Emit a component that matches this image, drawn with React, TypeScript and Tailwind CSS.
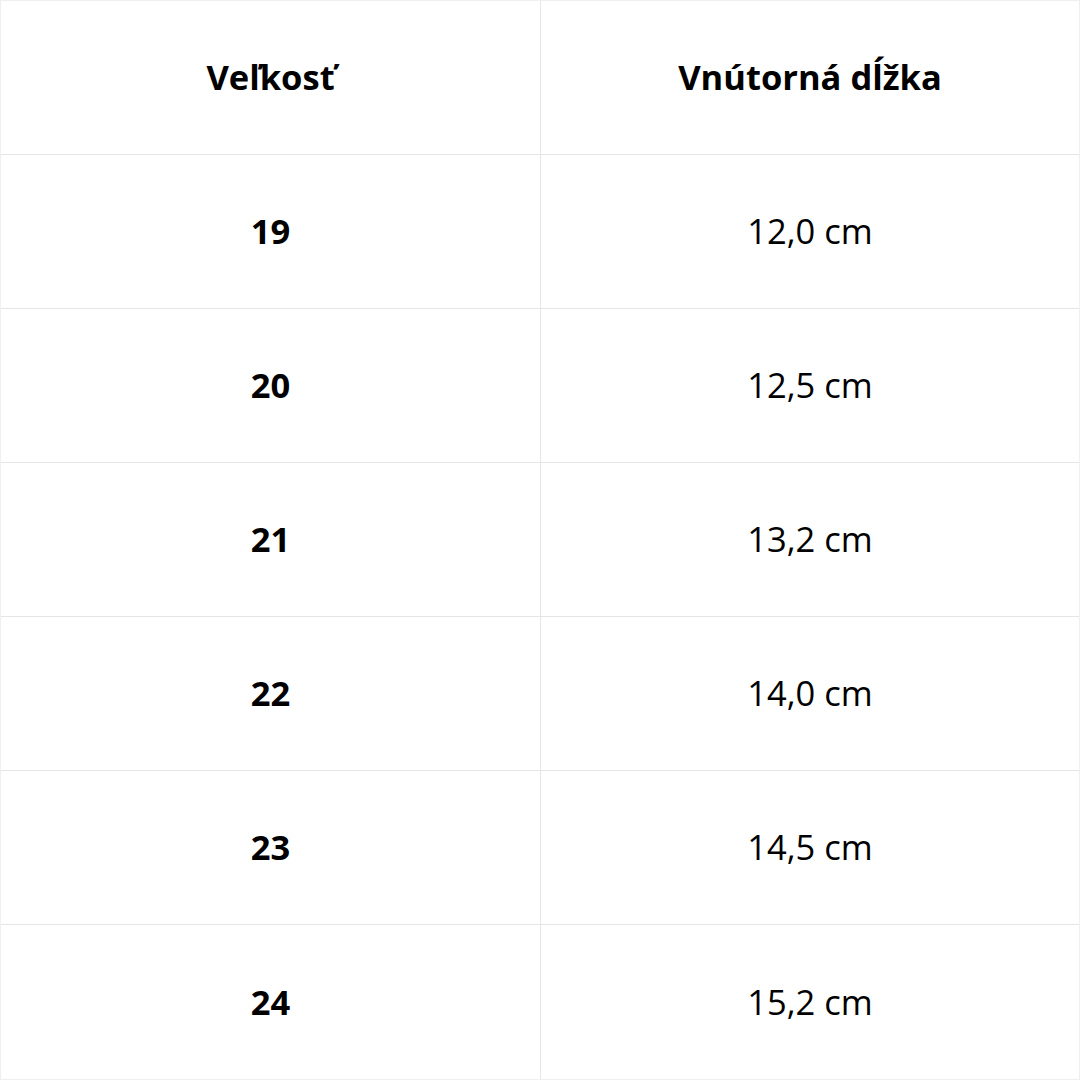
import React from "react";

const rows = [
  ["19", "12,0 cm"],
  ["20", "12,5 cm"],
  ["21", "13,2 cm"],
  ["22", "14,0 cm"],
  ["23", "14,5 cm"],
  ["24", "15,2 cm"],
];

const App: React.FC = () => {
  return (
    <div className="w-[1080px] h-[1080px] bg-white font-['Open_Sans',sans-serif] text-[34.5px] leading-none text-black">
      <div className="grid h-full w-full grid-cols-[540px_1fr] grid-rows-7 border border-[#efefef]">
        {/* header */}
        <div className="flex items-center justify-center border-r border-b border-[#e6e6e6] font-bold">
          Veľkosť
        </div>
        <div className="flex items-center justify-center border-b border-[#e6e6e6] font-bold">
          Vnútorná dĺžka
        </div>

        {rows.map(([size, length], i) => (
          <React.Fragment key={size}>
            <div
              className={
                i === rows.length - 1
                  ? "flex items-center justify-center border-r border-[#e6e6e6] font-bold"
                  : "flex items-center justify-center border-r border-b border-[#e6e6e6] font-bold"
              }
            >
              {size}
            </div>
            <div
              className={
                i === rows.length - 1
                  ? "flex items-center justify-center"
                  : "flex items-center justify-center border-b border-[#e6e6e6]"
              }
            >
              {length}
            </div>
          </React.Fragment>
        ))}
      </div>
    </div>
  );
};

export default App;
